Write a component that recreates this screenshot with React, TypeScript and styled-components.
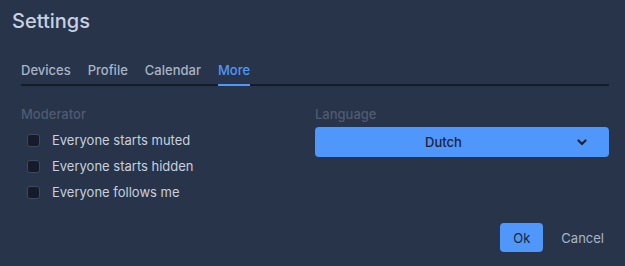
import React, { useState } from 'react'
import styled, { createGlobalStyle } from 'styled-components'

const GlobalStyle = createGlobalStyle`
  html, body {
    margin: 0;
    padding: 0;
    background: #28344a;
  }
  body {
    font-family: Inter, 'Liberation Sans', Arial, sans-serif;
  }
`

const Dialog = styled.div`
  width: 625px;
  height: 266px;
  box-sizing: border-box;
  background: #28344a;
  padding: 7px 16px 0 12px;
  display: flex;
  flex-direction: column;
`

const Title = styled.h1`
  margin: 0;
  font-size: 20px;
  font-weight: 500;
  color: #c6d1e4;
  line-height: 28px;
`

const TabBar = styled.div`
  display: flex;
  gap: 17px;
  margin: 27px 0 0 9px;
  border-bottom: 2px solid #141b29;
`

const Tab = styled.button<{ $active?: boolean }>`
  background: none;
  border: none;
  padding: 0 0 5px;
  margin-bottom: -2px;
  font: inherit;
  font-size: 13px;
  font-weight: 500;
  line-height: 17px;
  cursor: pointer;
  color: ${(p) => (p.$active ? '#4f97fb' : '#a9b4c6')};
  border-bottom: 2px solid ${(p) => (p.$active ? '#4f97fb' : 'transparent')};
`

const Body = styled.div`
  display: grid;
  grid-template-columns: 294px 294px;
  margin: 20px 0 0 9px;
`

const Section = styled.div`
  display: flex;
  flex-direction: column;
`

const Label = styled.div`
  font-size: 13px;
  font-weight: 500;
  color: #4f5b70;
  line-height: 16px;
  margin-bottom: 5px;
`

const CheckRow = styled.label`
  display: flex;
  align-items: center;
  gap: 12px;
  height: 26px;
  padding-left: 6px;
  font-size: 13px;
  font-weight: 400;
  color: #c7d0df;
  cursor: pointer;
`

const Box = styled.span`
  width: 11px;
  height: 11px;
  border-radius: 3px;
  border: 1.5px solid #3d4960;
  background: #151b2a;
`

const Select = styled.div`
  height: 30px;
  border-radius: 4px;
  background: #4f97fb;
  color: #1c2434;
  font-size: 13px;
  font-weight: 500;
  display: flex;
  align-items: center;
  padding-right: 22px;
`

const SelectValue = styled.span`
  flex: 1;
  text-align: center;
`

const Chevron = styled.svg`
  margin-left: 5px;
`

const Footer = styled.div`
  display: flex;
  justify-content: flex-end;
  align-items: center;
  gap: 18px;
  margin: auto 5px 14px 0;
`

const OkButton = styled.button`
  width: 43px;
  height: 29px;
  border: none;
  border-radius: 4px;
  background: #4f97fb;
  color: #1c2434;
  font: inherit;
  font-size: 13px;
  font-weight: 400;
`

const CancelButton = styled.button`
  border: none;
  background: none;
  padding: 0;
  color: #a9b4c6;
  font: inherit;
  font-size: 13px;
  font-weight: 400;
`

const tabs = ['Devices', 'Profile', 'Calendar', 'More']
const options = ['Everyone starts muted', 'Everyone starts hidden', 'Everyone follows me']

export default function App() {
  const [active, setActive] = useState('More')
  return (
    <>
      <GlobalStyle />
      <Dialog>
        <Title>Settings</Title>
        <TabBar>
          {tabs.map((t) => (
            <Tab key={t} $active={t === active} onClick={() => setActive(t)}>
              {t}
            </Tab>
          ))}
        </TabBar>
        <Body>
          <Section>
            <Label>Moderator</Label>
            {options.map((o) => (
              <CheckRow key={o}>
                <Box />
                {o}
              </CheckRow>
            ))}
          </Section>
          <Section>
            <Label>Language</Label>
            <Select>
              <SelectValue>Dutch</SelectValue>
              <Chevron width="10" height="7" viewBox="0 0 10 7">
                <path d="M1.5 1.5 L5 5 L8.5 1.5" fill="none" stroke="#1c2434" strokeWidth="2.2" strokeLinecap="round" strokeLinejoin="round" />
              </Chevron>
            </Select>
          </Section>
        </Body>
        <Footer>
          <OkButton>Ok</OkButton>
          <CancelButton>Cancel</CancelButton>
        </Footer>
      </Dialog>
    </>
  )
}
